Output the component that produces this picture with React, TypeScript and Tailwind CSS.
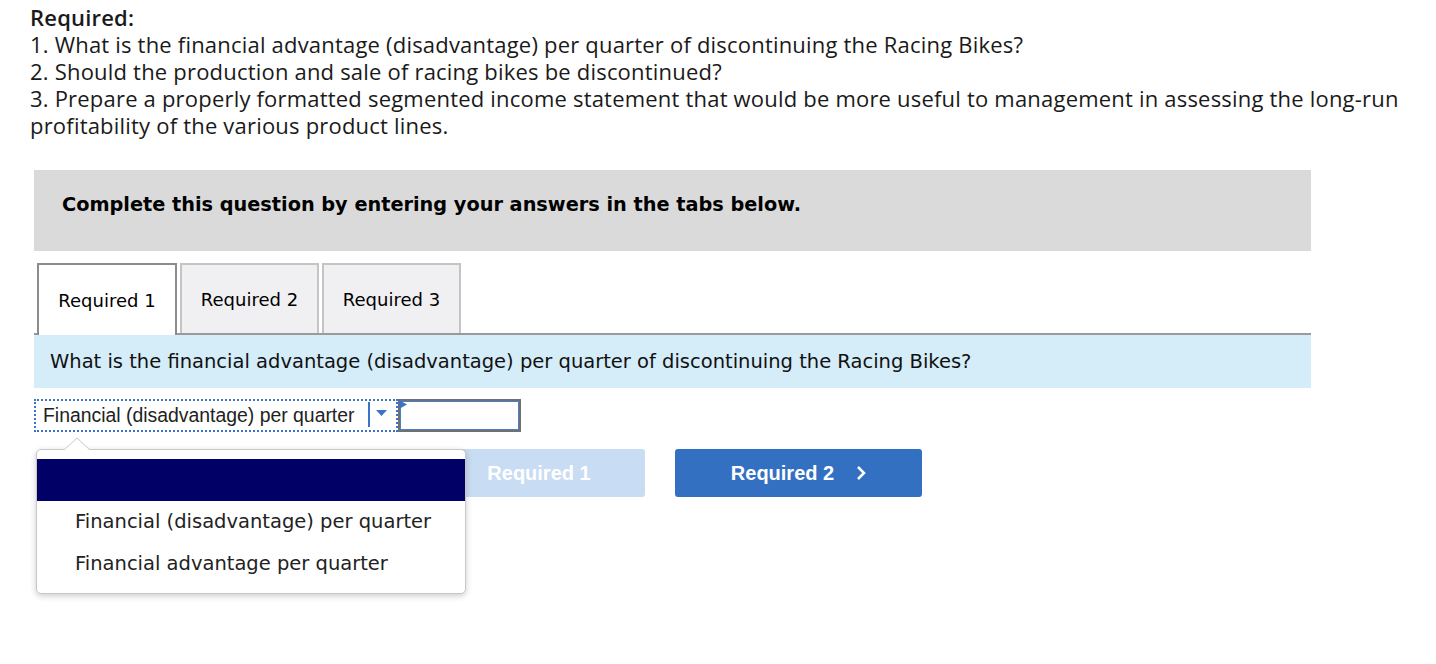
import React from "react";

const verd = { fontFamily: '"DejaVu Sans", Verdana, sans-serif' };

export default function App() {
  return (
    <div className="relative min-h-[664px] w-[1436px] bg-white pl-[30px] pt-[4px] text-[#222]">
      <div className="text-[22px] leading-[27px] tracking-[0.2px] text-[#1a1a1a]" style={{ fontFamily: '"Open Sans", sans-serif' }}>
        <div className="font-semibold">Required:</div>
        <div>1. What is the financial advantage (disadvantage) per quarter of discontinuing the Racing Bikes?</div>
        <div>2. Should the production and sale of racing bikes be discontinued?</div>
        <div>3. Prepare a properly formatted segmented income statement that would be more useful to management in assessing the long-run</div>
        <div>profitability of the various product lines.</div>
      </div>

      <div className="relative ml-[4px] mt-[31px] w-[1277px]">
        <div className="flex h-[81px] items-center bg-[#dadada] pb-[10px] pl-[28px] text-[19.3px] font-bold text-black" style={verd}>
          Complete this question by entering your answers in the tabs below.
        </div>

        <div className="mt-[12px] flex gap-[3px] border-b-2 border-[#9a9a9a] pl-[3px]" style={verd}>
          <div className="-mb-[2px] flex h-[72px] w-[140px] items-center justify-center border-2 border-b-0 border-[#8c8c8c] bg-white text-[18px] text-black">
            Required 1
          </div>
          <div className="flex h-[70px] w-[139px] items-center justify-center border-2 border-b-0 border-[#c4c4c4] bg-[#f0eff1] text-[18px] text-black">
            Required 2
          </div>
          <div className="flex h-[70px] w-[139px] items-center justify-center border-2 border-b-0 border-[#c4c4c4] bg-[#f0eff1] text-[18px] text-black">
            Required 3
          </div>
        </div>

        <div className="flex h-[53px] items-center bg-[#d5ecf9] pl-[16px] text-[19.5px] text-[#111]" style={verd}>
          What is the financial advantage (disadvantage) per quarter of discontinuing the Racing Bikes?
        </div>

        <div className="mt-[11px] flex h-[33px]">
          <div className="relative flex h-[33px] w-[364px] items-center border-2 border-dotted border-[#3b74c6] pl-[7px] text-[19.4px] text-[#222]" style={{ fontFamily: '"Liberation Sans", Arial, sans-serif' }}>
            Financial (disadvantage) per quarter
            <div className="absolute right-[26px] top-[1px] h-[25px] w-[2px] bg-[#3b74c6]" />
            <svg className="absolute right-[9px] top-[9px]" width="11" height="6" viewBox="0 0 11 6">
              <polygon points="0,0 11,0 5.5,6" fill="#3b74c6" />
            </svg>
          </div>
          <div className="relative h-[33px] w-[123px] border-2 border-[#707070] bg-white">
            <div className="absolute inset-0 border border-[#4a7fd0]" />
            <svg className="absolute -left-[1px] -top-[1px]" width="8" height="9" viewBox="0 0 8 9">
              <polygon points="0,0 8,4.5 0,9" fill="#3b74c6" />
            </svg>
          </div>
        </div>

        <div className="mt-[17px] flex gap-[30px] pl-[399px]" style={{ fontFamily: '"Liberation Sans", Arial, sans-serif' }}>
          <div className="flex h-[48px] w-[212px] items-center justify-center rounded-[3px] bg-[#c8dcf3] text-[20px] font-bold text-white">
            Required 1
          </div>
          <div className="flex h-[48px] w-[247px] items-center justify-center gap-[22px] rounded-[3px] bg-[#3370c1] text-[20px] font-bold text-white">
            <span>Required 2</span>
            <svg width="10" height="16" viewBox="0 0 10 16">
              <polyline points="2,2 8,8 2,14" fill="none" stroke="white" strokeWidth="2.5" />
            </svg>
          </div>
        </div>

        <div className="absolute left-[2px] top-[279px] h-[145px] w-[430px] rounded-[5px] border border-[#c8c8c8] bg-white shadow-[0_2px_6px_rgba(0,0,0,0.2)]" style={verd}>
          <svg className="absolute left-[26px] -top-[13px]" width="28" height="14" viewBox="0 0 28 14">
            <polygon points="0,14 14,1 28,14" fill="white" stroke="#c8c8c8" strokeWidth="1" />
            <rect x="0" y="13" width="28" height="2" fill="white" />
          </svg>
          <div className="mt-[9px] h-[42px] bg-[#000066]" />
          <div className="flex h-[42px] items-center pl-[38px] text-[19.5px] text-[#222]">Financial (disadvantage) per quarter</div>
          <div className="flex h-[42px] items-center pl-[38px] text-[19.5px] text-[#222]">Financial advantage per quarter</div>
        </div>
      </div>
    </div>
  );
}
